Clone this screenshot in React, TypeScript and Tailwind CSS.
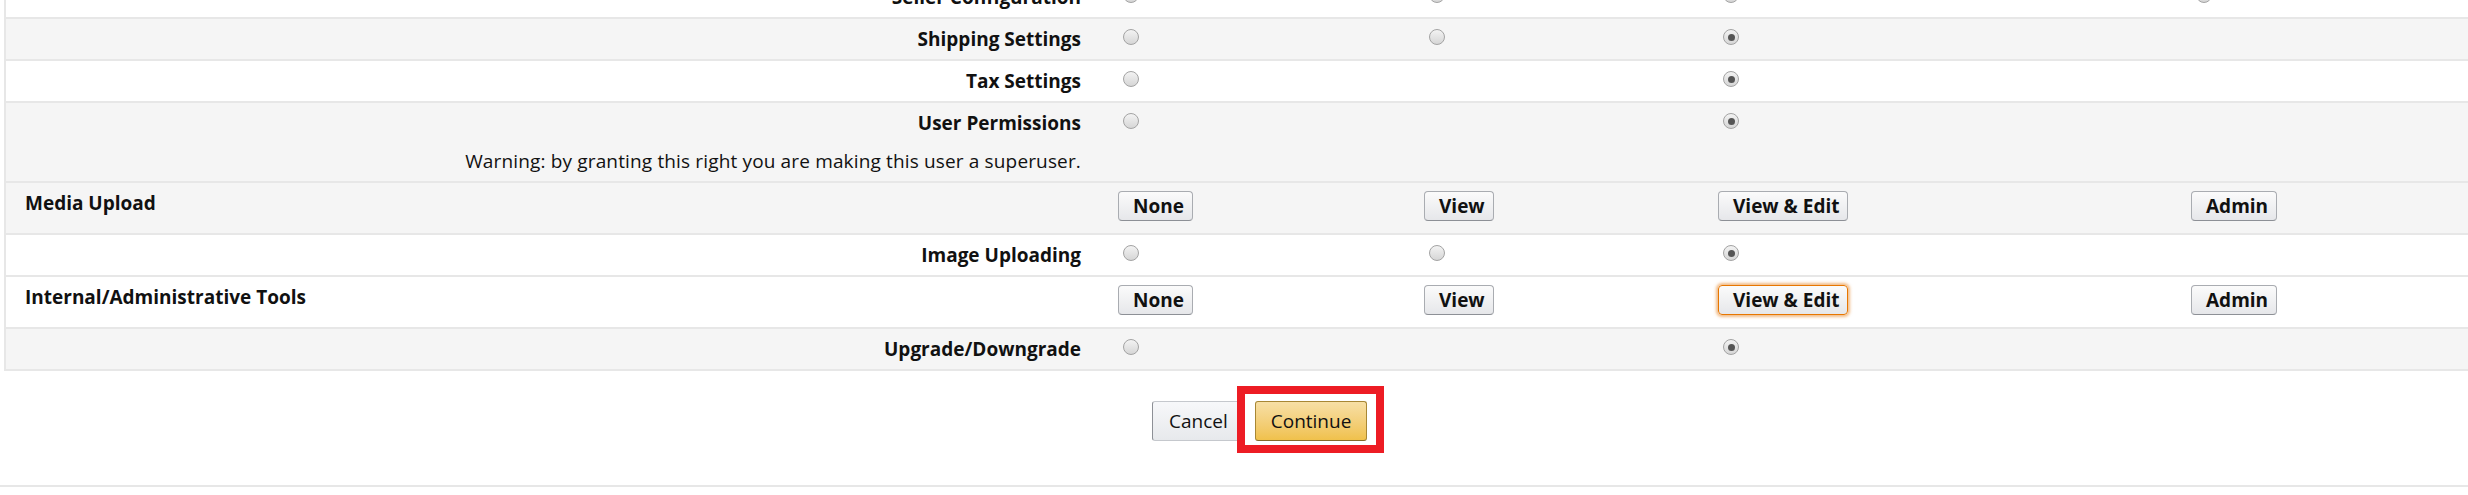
import React from 'react';
import clsx from 'clsx';

type Level = 'none' | 'view' | 'edit' | 'admin';

// column widths of the four permission levels
const cols: { key: Level; w: string }[] = [
  { key: 'none', w: 'w-[306px]' },
  { key: 'view', w: 'w-[294px]' },
  { key: 'edit', w: 'w-[473px]' },
  { key: 'admin', w: 'flex-1' },
];

const labels: Record<Level, string> = {
  none: 'None',
  view: 'View',
  edit: 'View & Edit',
  admin: 'Admin',
};

const Radio = ({ checked }: { checked?: boolean }) => (
  <span className="flex h-[16px] w-[16px] items-center justify-center rounded-full border border-[#a3a3a3] bg-linear-to-b from-[#f3f3f3] to-[#d6d6d6]">
    {checked && <span className="h-[7px] w-[7px] rounded-full bg-[#555]" />}
  </span>
);

const LevelButton = ({ label, focused }: { label: string; focused?: boolean }) => (
  <button
    type="button"
    className={clsx(
      'flex h-[30px] items-center rounded-[4px] border bg-linear-to-b from-[#fbfbfb] to-[#e6e7ea] pl-[14px] pr-[8px] font-bold leading-[25px] text-[#111]',
      focused
        ? 'border-[#e77600] shadow-[0_0_3px_2px_rgba(228,121,17,0.5)]'
        : 'border-[#a9acb1] border-b-[#8d9096]'
    )}
  >
    {label}
  </button>
);

// a sub-permission row: right aligned label + radios
const RadioRow = ({
  label,
  levels,
  checked,
  gray,
  warning,
}: {
  label: string;
  levels: Level[];
  checked?: Level;
  gray?: boolean;
  warning?: string;
}) => (
  <div className={clsx('flex border-b-2 border-[#e7e7e7]', gray ? 'bg-[#f5f5f5]' : 'bg-white')}>
    <div className="w-[1112px] shrink-0 pb-[7px] pr-[37px] pt-[8px] text-right leading-[25px]">
      <div className="font-bold">{label}</div>
      {warning && <div className="mt-[13px] tracking-[0.15px]">{warning}</div>}
    </div>
    {cols.map((c) => (
      <div key={c.key} className={clsx('shrink-0 pl-[5px] pt-[10px]', c.w)}>
        {levels.includes(c.key) && <Radio checked={checked === c.key} />}
      </div>
    ))}
  </div>
);

// a section header row with the four level buttons
const SectionRow = ({ label, focused, gray }: { label: string; focused?: Level; gray?: boolean }) => (
  <div className={clsx('flex border-b-2 border-[#e7e7e7]', gray ? 'bg-[#f5f5f5]' : 'bg-white')}>
    <div className="w-[1112px] shrink-0 pb-[12px] pl-[19px] pt-[8px] font-bold leading-[25px]">{label}</div>
    {cols.map((c) => (
      <div key={c.key} className={clsx('shrink-0 pb-[12px] pt-[8px]', c.w)}>
        <LevelButton label={labels[c.key]} focused={focused === c.key} />
      </div>
    ))}
  </div>
);

const App = () => {
  return (
    <div className="h-[495px] overflow-hidden bg-white font-['Open_Sans',sans-serif] text-[19px] text-[#111]">
      <div className="pl-[4px]">
        <div className="-mt-[23px] border-l-2 border-[#e7e7e7]">
          <RadioRow label="Seller Configuration" levels={['none', 'view', 'edit', 'admin']} />
          <RadioRow label="Shipping Settings" levels={['none', 'view', 'edit']} checked="edit" gray />
          <RadioRow label="Tax Settings" levels={['none', 'edit']} checked="edit" />
          <RadioRow
            label="User Permissions"
            levels={['none', 'edit']}
            checked="edit"
            gray
            warning="Warning: by granting this right you are making this user a superuser."
          />
          <SectionRow label="Media Upload" gray />
          <RadioRow label="Image Uploading" levels={['none', 'view', 'edit']} checked="edit" />
          <SectionRow label="Internal/Administrative Tools" focused="edit" />
          <RadioRow label="Upgrade/Downgrade" levels={['none', 'edit']} checked="edit" gray />
        </div>
      </div>

      <div className="flex gap-[10px] border-b-2 border-[#e7e7e7] pb-[44px] pl-[1152px] pt-[30px]">
        <button
          type="button"
          className="h-[40px] rounded-[3px] border border-[#c5c8cd] border-l-[#8d9096] bg-linear-to-b from-[#f7f8fa] to-[#e7e9ec] px-[16px] leading-[25px] text-[#111]"
        >
          Cancel
        </button>
        <span className="relative">
          <button
            type="button"
            className="h-[40px] rounded-[3px] border border-[#a88734] border-b-[#846a29] bg-linear-to-b from-[#f7dfa5] to-[#f0c14b] px-[15px] leading-[25px] text-[#111]"
          >
            Continue
          </button>
          {/* annotation box drawn over the button */}
          <span className="pointer-events-none absolute -bottom-[12px] -left-[18px] -right-[17px] -top-[15px] border-[8px] border-[#ed1c24]" />
        </span>
      </div>
    </div>
  );
};

export default App;
